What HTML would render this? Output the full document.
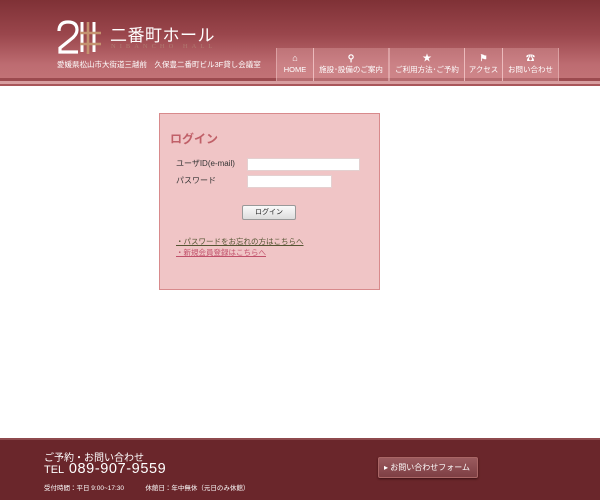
<!DOCTYPE html>
<html><head><meta charset="utf-8"><style>
*{margin:0;padding:0;box-sizing:border-box}
body{width:600px;height:500px;position:relative;background:#fff;font-family:"Liberation Sans","Noto Sans CJK JP",sans-serif;overflow:hidden}
#hd{position:absolute;left:0;top:0;width:600px;height:86px;background:linear-gradient(#7f3136 0%,#9a464c 40%,#bd6c71 75%,#c57579 100%)}
#hd .l1{position:absolute;left:0;top:78px;width:600px;height:3px;background:#9c4a4f}
#hd .l2{position:absolute;left:0;top:81px;width:600px;height:3px;background:#d89ea0}
#hd .l3{position:absolute;left:0;top:84px;width:600px;height:2px;background:#a9565a}
.t{position:absolute;color:#fff;white-space:nowrap}
.nav{position:absolute;top:48px;height:33px;background:rgba(230,170,172,.35);border-left:1px solid rgba(255,220,220,.4);border-right:1px solid rgba(255,220,220,.4);color:#fff;font-size:7.5px;text-align:center;padding-top:5px;line-height:1.6}
.nav b{display:block;font-size:9px;line-height:11px}
#box{position:absolute;left:159px;top:113px;width:221px;height:177px;background:#f0c5c6;border:1px solid #d88a8c}
#ft{position:absolute;left:0;top:438px;width:600px;height:62px;background:#6a262b;border-top:2px solid #8e4a4e}
input{position:absolute;background:#fff;border:1px solid #e4d0d0}
</style></head><body>
<div id="hd"><div class="l1"></div><div class="l2"></div><div class="l3"></div></div>
<svg style="position:absolute;left:56px;top:20px" width="46" height="35" viewBox="0 0 46 35">
<path d="M3 11 Q3 2 12 2 Q21 2 21 10 Q21 15 14 20 L4 28 L4 32 L22 32" fill="none" stroke="#fff" stroke-width="3.2"/>
<path d="M26 2V32M38 2V32" stroke="#fff" stroke-width="3"/>
<path d="M32 2V34M24 13H45M24 24H45" stroke="#c49370" stroke-width="2.6"/>
</svg>
<div class="t" style="left:110px;top:21px;font-size:17px;letter-spacing:0.5px">二番町ホール</div>
<div class="t" style="left:111px;top:43px;font-size:6.5px;letter-spacing:4px;color:#b07a70;font-family:'Liberation Serif',serif">NIBANCHO HALL</div>
<div class="t" style="left:57px;top:59px;font-size:7.5px">愛媛県松山市大街道三越前　久保豊二番町ビル3F貸し会議室</div>
<div class="nav" style="left:276px;width:38px"><b>⌂</b>HOME</div>
<div class="nav" style="left:313px;width:76px"><b>⚲</b>施設･設備のご案内</div>
<div class="nav" style="left:389px;width:76px"><b>★</b>ご利用方法･ご予約</div>
<div class="nav" style="left:464px;width:39px"><b>⚑</b>アクセス</div>
<div class="nav" style="left:502px;width:57px"><b>☎</b>お問い合わせ</div>
<div id="box">
<div class="t" style="left:10px;top:16px;font-size:12px;font-weight:bold;color:#c06068">ログイン</div>
<div class="t" style="left:16px;top:44px;font-size:8px;color:#333">ユーザID(e-mail)</div>
<div class="t" style="left:16px;top:61px;font-size:8px;color:#333">パスワード</div>
<input style="left:87px;top:44px;width:113px;height:13px">
<input style="left:87px;top:61px;width:85px;height:13px">
<div style="position:absolute;left:82px;top:91px;width:54px;height:15px;background:linear-gradient(#fafafa,#ddd);border:1px solid #999;border-radius:2px;font-size:7px;text-align:center;line-height:13px;color:#222">ログイン</div>
<div class="t" style="left:16px;top:122px;font-size:7.5px;color:#553;text-decoration:underline">・パスワードをお忘れの方はこちらへ</div>
<div class="t" style="left:16px;top:133px;font-size:7.5px;color:#c0506a;text-decoration:underline">・新規会員登録はこちらへ</div>
</div>
<div id="ft">
<div class="t" style="left:44px;top:9px;font-size:10px">ご予約・お問い合わせ</div>
<div class="t" style="left:44px;top:21px;font-size:11px">TEL <span style="font-size:14.5px;letter-spacing:0.6px;margin-left:2px">089-907-9559</span></div>
<div class="t" style="left:44px;top:42px;font-size:6.5px">受付時間：平日 9:00~17:30　　　 休館日：年中無休（元日のみ休館）</div>
<div style="position:absolute;left:378px;top:17px;width:100px;height:21px;background:linear-gradient(#9a5a5e,#7e3f44);border:1px solid #a66;border-radius:2px;color:#fff;font-size:8px;line-height:19px;padding-left:5px;box-shadow:0 1px 2px #3a1013">▸ お問い合わせフォーム</div>
</div>
</body></html>
